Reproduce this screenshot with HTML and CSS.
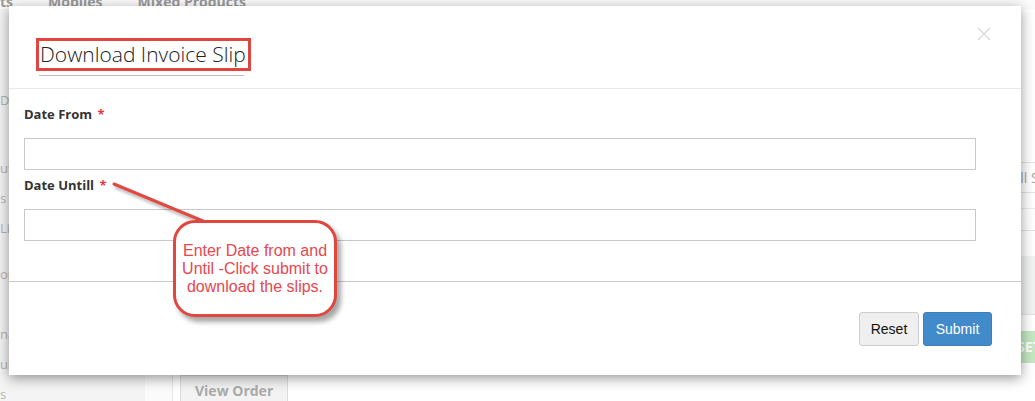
FILE: index.html
```html
<!DOCTYPE html>
<html>
<head>
<meta charset="utf-8">
<link rel="stylesheet" href="styles.css">
</head>
<body>
<div class="page">
  <nav class="topnav">
    <span class="tab">ts</span>
    <span class="tab">Mobiles</span>
    <span class="tab">Mixed Products</span>
  </nav>
  <div class="main">
    <aside class="sidebar">
      <div class="side-item first">Dashboard</div>
      <div class="side-item">utlets</div>
      <div class="side-item">s</div>
      <div class="side-item">Lists</div>
      <div class="side-item gap">orders</div>
      <div class="side-item indent">F</div>
      <div class="side-item">nage</div>
      <div class="side-item">urns</div>
      <div class="side-item">s</div>
    </aside>
    <section class="content">
      <div class="toolbar"><span class="tool-btn">Pull Slips</span></div>
      <div class="row-line"></div>
      <div class="table-head"></div>
      <div class="table-body"></div>
      <div class="green-row"><span class="green-btn">SET</span></div>
      <div class="bottom-row"><span class="view-btn">View Order</span></div>
    </section>
  </div>

  <div class="modal">
    <div class="modal-header">
      <h4 class="modal-title">Download Invoice Slip</h4>
      <div class="title-rule"></div>
      <svg class="close" width="14" height="14" viewBox="0 0 14 14"><path d="M1 1 L13 13 M13 1 L1 13" stroke="#d9d9d9" stroke-width="1.4" fill="none"/></svg>
    </div>
    <div class="modal-body">
      <label class="field-label">Date From <span class="req">*</span></label>
      <input class="field-input" type="text">
      <label class="field-label second">Date Untill <span class="req">*</span></label>
      <input class="field-input" type="text">
    </div>
    <div class="modal-footer">
      <button class="btn btn-reset">Reset</button>
      <button class="btn btn-submit">Submit</button>
    </div>
  </div>

  <svg class="pointer" width="240" height="240" viewBox="0 0 240 240">
    <defs>
      <filter id="sh" x="-20%" y="-20%" width="140%" height="140%">
        <feDropShadow dx="2" dy="3" stdDeviation="1.5" flood-color="#000" flood-opacity="0.3"/>
      </filter>
    </defs>
    <line x1="114" y1="184" x2="210" y2="224" stroke="#e0483f" stroke-width="3" stroke-linecap="round" filter="url(#sh)"/>
  </svg>
  <div class="callout">
    <p>Enter Date from and<br>Until -Click submit to<br>download the slips.</p>
  </div>
</div>
</body>
</html>
```
FILE: styles.css
```css
html, body {
  margin: 0;
  padding: 0;
}
body {
  font-family: "Open Sans", "Liberation Sans", sans-serif;
  background: #ffffff;
  width: 1035px;
  height: 401px;
  overflow: hidden;
}
.page {
  position: relative;
  width: 1035px;
  height: 401px;
  overflow: hidden;
  background: #fbfbfb;
}
.topnav {
  display: flex;
  gap: 35px;
  height: 14px;
  margin-top: -5px;
  line-height: 14px;
  font-size: 14px;
  font-weight: 700;
  color: #9a9a9a;
}
.main {
  display: flex;
  height: 392px;
}
.sidebar {
  width: 145px;
  background: #f4f4f4;
  color: #b5b5b5;
  font-size: 13px;
  padding-top: 76px;
  box-sizing: border-box;
}
.side-item {
  height: 30px;
  line-height: 30px;
  white-space: nowrap;
}
.side-item.first {
  margin-bottom: 38px;
}
.side-item.gap {
  margin-top: 16px;
}
.side-item.indent {
  padding-left: 12px;
}
.content {
  flex: 1;
  margin-left: 27px;
  border-left: 1px solid #e6e6e6;
  display: flex;
  flex-direction: column;
  padding-top: 153px;
  background: #fff;
  overflow: hidden;
}
.content > * {
  flex-shrink: 0;
}
.toolbar {
  height: 29px;
  border-top: 1px solid #e3e3e3;
  border-bottom: 1px solid #e3e3e3;
  display: flex;
  justify-content: flex-end;
  align-items: center;
  overflow: hidden;
}
.tool-btn {
  font-size: 14px;
  color: #a8a8a8;
  margin-right: -26px;
  white-space: nowrap;
  flex-shrink: 0;
}
.row-line {
  height: 15px;
  border-bottom: 1px solid #ececec;
}
.table-head {
  height: 21px;
  border-bottom: 1px solid #e3e3e3;
}
.table-body {
  height: 58px;
  margin-top: 25px;
  background: #f1f3f3;
  border-bottom: 1px solid #e3e3e3;
}
.green-row {
  display: flex;
  justify-content: flex-end;
  margin-top: 16px;
  height: 32px;
}
.green-btn {
  background: #c4e8c2;
  color: #fff;
  font-weight: 700;
  font-size: 14px;
  line-height: 32px;
  padding: 0 4px 0 3px;
  width: 14px;
  overflow: hidden;
}
.bottom-row {
  margin-top: 12px;
  padding-left: 7px;
}
.view-btn {
  display: inline-block;
  border: 1px solid #dcdcdc;
  background: #f3f3f3;
  color: #aaaaaa;
  font-size: 14px;
  font-weight: 700;
  padding: 0 14px;
  line-height: 30px;
}

/* modal */
.modal {
  position: absolute;
  left: 9px;
  top: 6px;
  width: 1012px;
  background: #fff;
  box-shadow: 0 3px 12px rgba(0, 0, 0, 0.42);
}
.modal-header {
  position: relative;
  height: 83px;
  box-sizing: border-box;
  padding: 32px 0 0 27px;
  border-bottom: 1px solid #e9e9e9;
}
.modal-title {
  display: inline-block;
  margin: 0;
  border: 3px solid #e0463f;
  padding: 0 2px 0 1px;
  font-size: 21px;
  font-weight: 300;
  line-height: 27px;
  color: #222;
}
.title-rule {
  margin: 4px 0 0 3px;
  width: 205px;
  height: 1px;
  background: #bdbdbd;
}
.close {
  position: absolute;
  left: 968px;
  top: 21px;
}
.modal-body {
  padding: 15px 45px 40px 15px;
}
.field-label {
  display: block;
  font-size: 13px;
  font-weight: 700;
  line-height: 20px;
  color: #333;
  margin-bottom: 14px;
}
.field-label.second {
  margin-top: 5px;
}
.req {
  color: #e33b3b;
  margin-left: 2px;
}
.field-input {
  display: block;
  width: 100%;
  height: 32px;
  box-sizing: border-box;
  border: 1px solid #c8c8c8;
  margin: 0;
  padding: 0;
  background: #fff;
}
.modal-footer {
  border-top: 1px solid #c9c9c9;
  padding: 30px 29px 29px;
  display: flex;
  justify-content: flex-end;
  gap: 4px;
}
.btn {
  font-family: "Liberation Sans", Arial, sans-serif;
  font-size: 14px;
  height: 34px;
  border-radius: 3px;
  margin: 0;
  padding: 0;
}
.btn-reset {
  width: 60px;
  background: #efefef;
  border: 1px solid #cdcdcd;
  color: #111;
}
.btn-submit {
  width: 69px;
  background: #428bca;
  border: 1px solid #3c7fbb;
  color: #fff;
}

/* annotation */
.pointer {
  position: absolute;
  left: 0;
  top: 0;
}
.callout {
  position: absolute;
  left: 173px;
  top: 220px;
  width: 164px;
  height: 97px;
  box-sizing: border-box;
  border: 3px solid #e0483f;
  border-radius: 22px;
  background: #fff;
  box-shadow: 4px 5px 5px rgba(0, 0, 0, 0.35);
  display: flex;
  align-items: center;
  justify-content: center;
}
.callout p {
  margin: 0;
  font-family: "Liberation Sans", Arial, sans-serif;
  font-size: 16px;
  line-height: 18px;
  color: #e8474d;
  text-align: center;
}
```
